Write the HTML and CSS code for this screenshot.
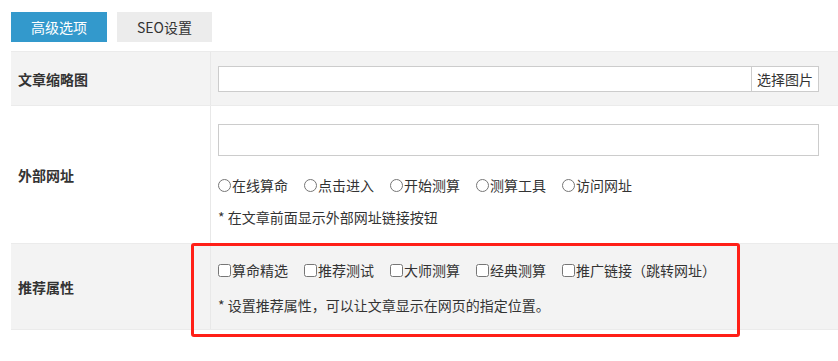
FILE: index.html
```html
<!DOCTYPE html>
<html lang="zh-CN">
<head>
  <meta charset="UTF-8">
  <meta name="viewport" content="width=device-width, initial-scale=1.0">
  <title>高级选项</title>
  <link rel="stylesheet" href="styles.css">
</head>
<body>
  <div class="page">
    <!-- tabs -->
    <div class="tabs">
      <span class="tab active">高级选项</span>
      <span class="tab">SEO设置</span>
    </div>

    <div class="form">
      <div class="form-row gray">
        <div class="form-label">文章缩略图</div>
        <div class="form-field">
          <div class="input-group">
            <input type="text" class="text-input">
            <button class="pick-btn">选择图片</button>
          </div>
        </div>
      </div>

      <div class="form-row">
        <div class="form-label">外部网址</div>
        <div class="form-field url-field">
          <input type="text" class="url-input">
          <div class="options radios">
            <label><input type="radio" name="link">在线算命</label>
            <label><input type="radio" name="link">点击进入</label>
            <label><input type="radio" name="link">开始测算</label>
            <label><input type="radio" name="link">测算工具</label>
            <label><input type="radio" name="link">访问网址</label>
          </div>
          <p class="tip">* 在文章前面显示外部网址链接按钮</p>
        </div>
      </div>

      <div class="form-row gray">
        <div class="form-label">推荐属性</div>
        <div class="form-field attrs">
          <div class="options checks">
            <label><input type="checkbox">算命精选</label>
            <label><input type="checkbox">推荐测试</label>
            <label><input type="checkbox">大师测算</label>
            <label><input type="checkbox">经典测算</label>
            <label><input type="checkbox">推广链接（跳转网址）</label>
          </div>
          <p class="tip">* 设置推荐属性，可以让文章显示在网页的指定位置。</p>
        </div>
      </div>

      <!-- red highlight box -->
      <div class="highlight"></div>
    </div>
  </div>
</body>
</html>
```

FILE: styles.css
```css
body {
  margin: 0;
  padding: 0;
  font-family: "Noto Sans CJK SC", "Microsoft YaHei", sans-serif;
  font-size: 14px;
  color: #333;
  background: #fff;
}

.page {
  min-height: 361px;
  box-sizing: border-box;
  padding: 12px 0 0 11px;
}

.tabs {
  display: flex;
  gap: 10px;
  margin-bottom: 9px;
}

.tab {
  width: 95px;
  height: 30px;
  line-height: 30px;
  text-align: center;
  background-color: #ececec;
  color: #333;
}

.tab.active {
  width: 96px;
  background-color: #3399cc;
  color: #fff;
}

.form {
  position: relative;
  border-top: 1px solid #ebebeb;
}

.form-row {
  display: grid;
  grid-template-columns: 200px 1fr;
  border-bottom: 1px solid #ebebeb;
}

.form-row.gray {
  background-color: #f3f3f3;
}

.form-label {
  display: flex;
  align-items: center;
  padding-left: 7px;
  font-weight: bold;
  border-right: 1px solid #e8e8e8;
}

.form-field {
  padding: 14px 19px 13px 7px;
}

.input-group {
  display: flex;
  height: 24px;
  border: 1px solid #ccc;
  background: #fff;
}

.text-input {
  flex: 1;
  border: 0;
  outline: none;
  padding: 0;
}

.pick-btn {
  border: 0;
  border-left: 1px solid #ccc;
  background: #fff;
  padding: 0 5px;
  font-family: inherit;
  font-size: 14px;
  color: #333;
}

.url-field {
  padding-top: 18px;
  padding-bottom: 16px;
}

.url-input {
  display: block;
  box-sizing: border-box;
  width: 100%;
  height: 32px;
  border: 1px solid #ccc;
  margin: 0;
}

.options {
  display: flex;
  gap: 16px;
  line-height: 20px;
}

.radios {
  margin-top: 19px;
}

.options label {
  display: flex;
  align-items: center;
}

.options input {
  margin: 0 1px 0 0;
  width: 13px;
  height: 13px;
}

.tip {
  margin: 11px 0 0;
  line-height: 20px;
}

.url-field .tip {
  margin-top: 12px;
}

.attrs {
  padding-top: 16px;
  padding-bottom: 14px;
}

.attrs .tip {
  margin-top: 15px;
}

.highlight {
  position: absolute;
  left: 180px;
  top: 191px;
  width: 543px;
  height: 88px;
  border: 3px solid #ff1f17;
  border-radius: 3px;
}
```
